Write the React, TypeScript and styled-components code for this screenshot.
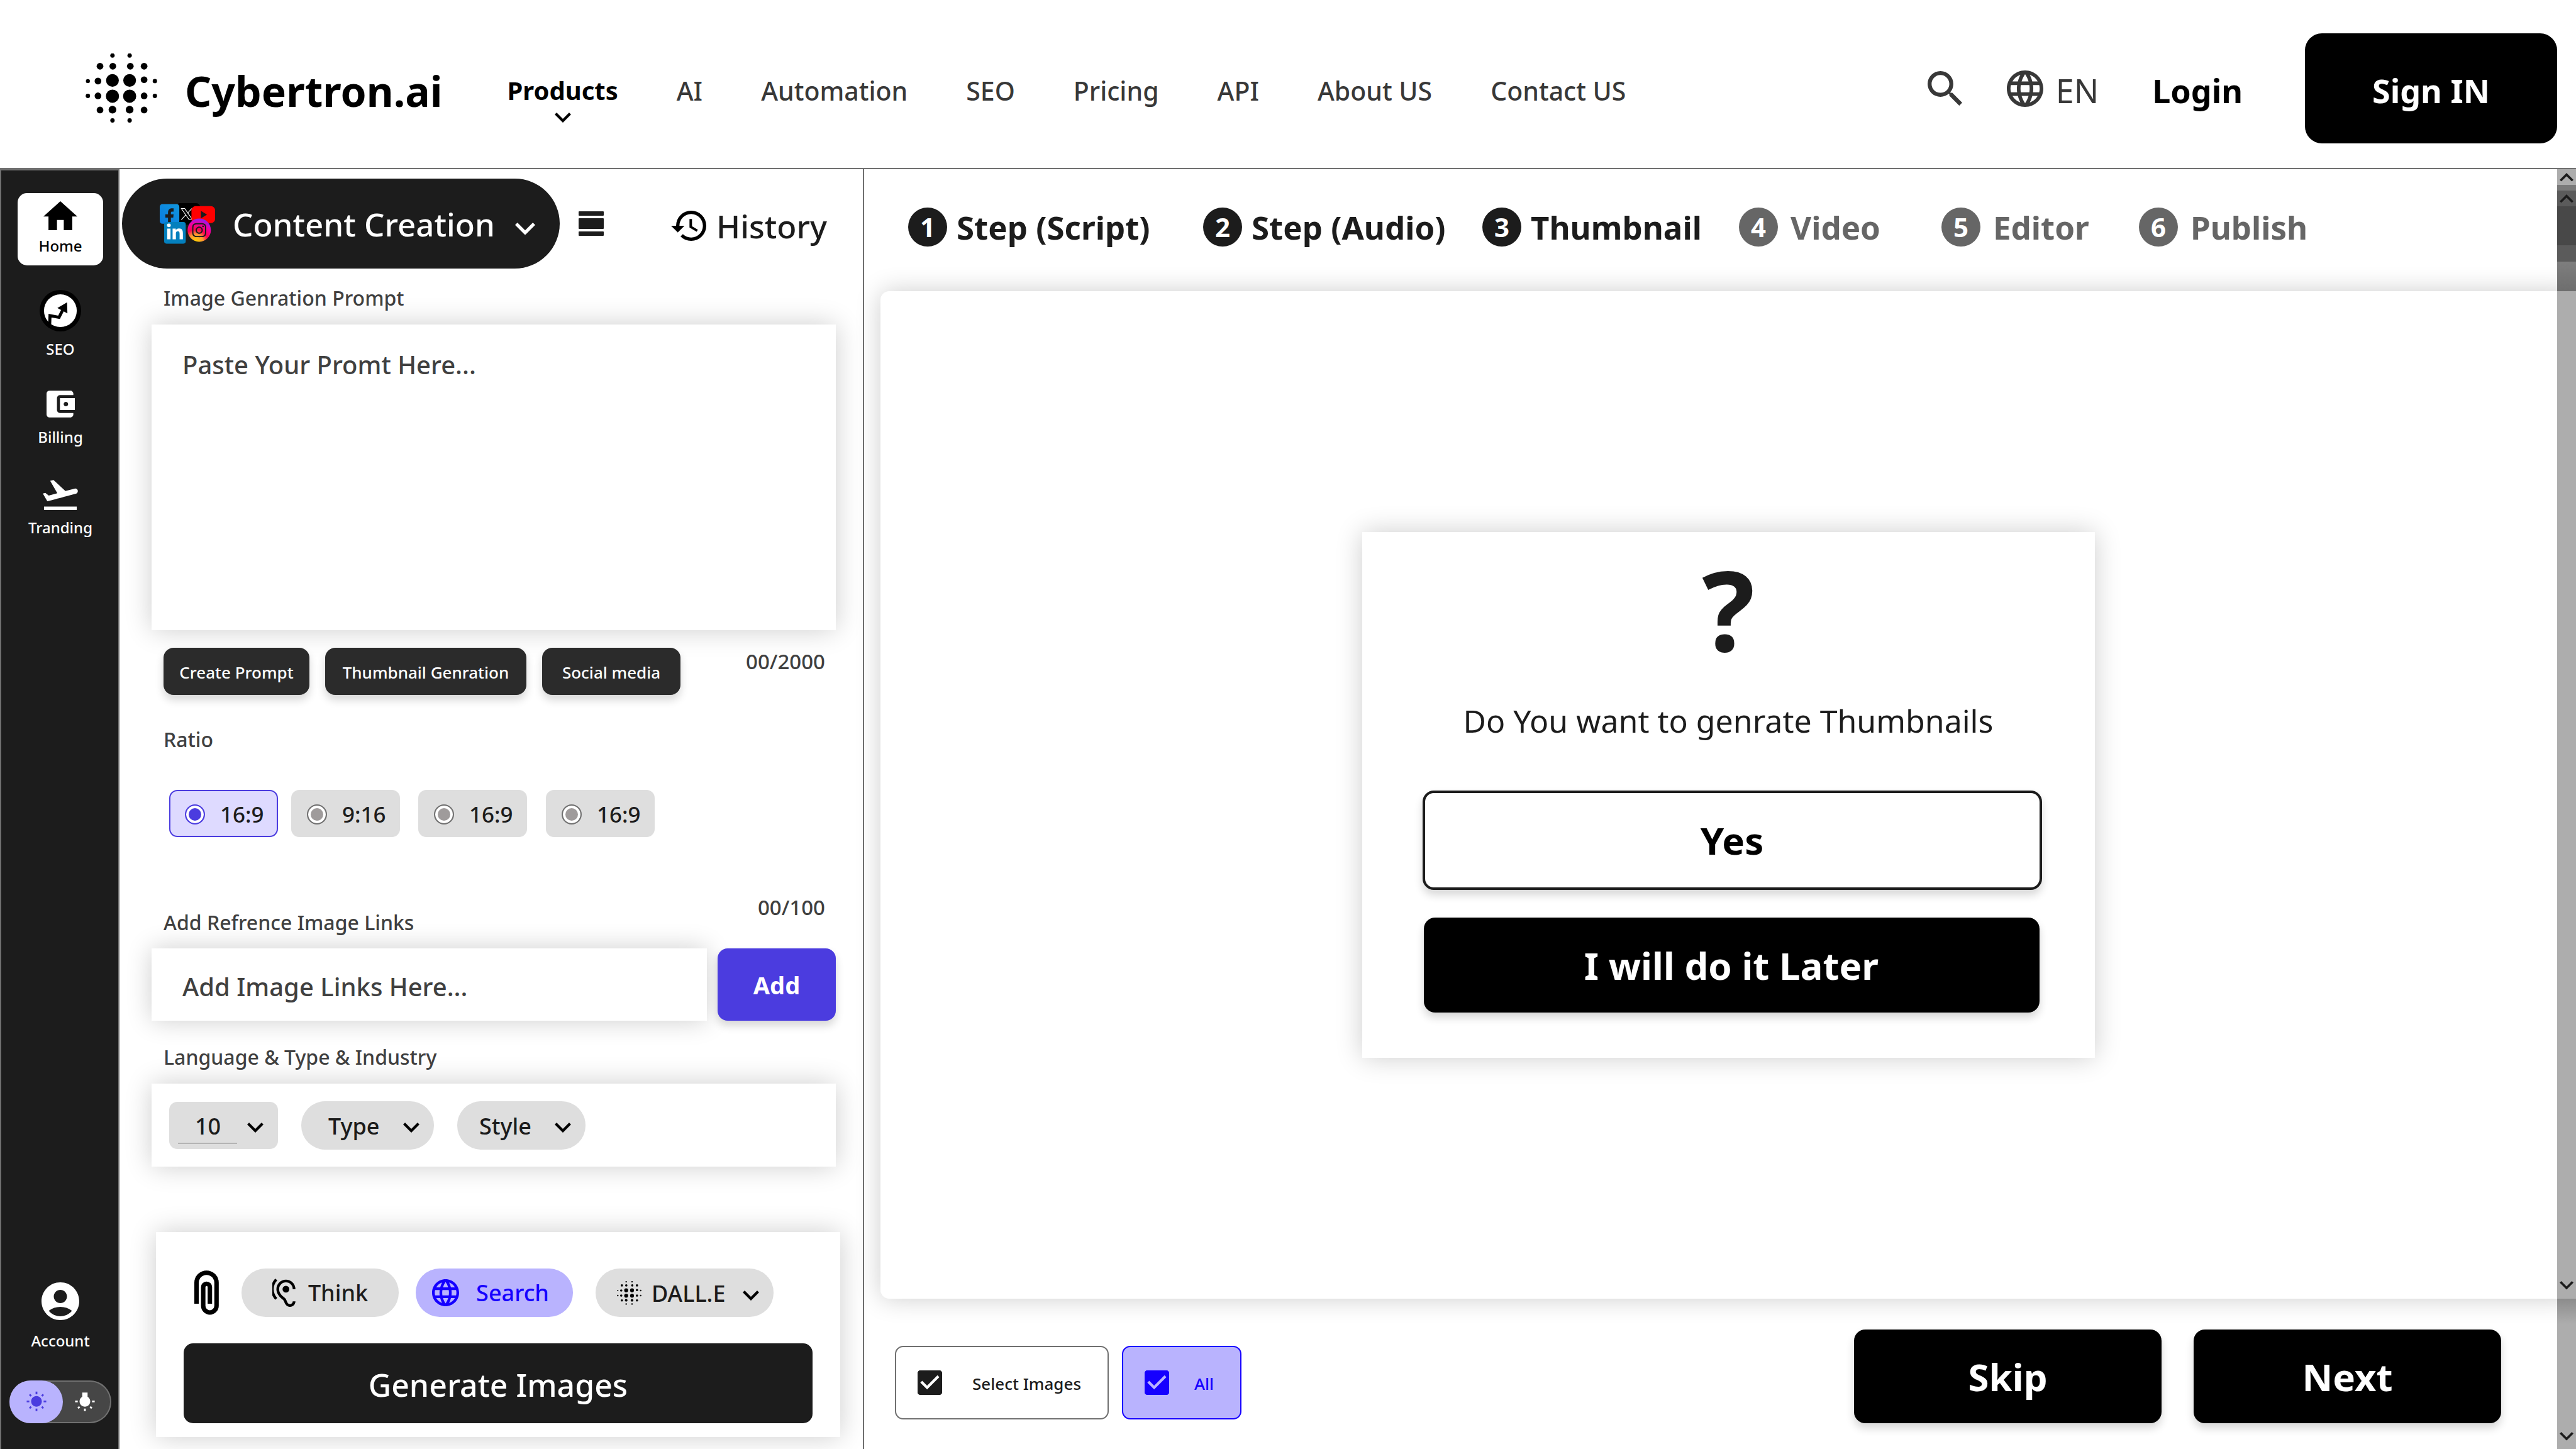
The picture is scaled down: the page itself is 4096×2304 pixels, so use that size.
import React, { useState } from "react";
import styled, { createGlobalStyle, css } from "styled-components";
import {
  MdSearch,
  MdLanguage,
  MdHome,
  MdAccountBalanceWallet,
  MdFlightTakeoff,
  MdAccountCircle,
  MdWbSunny,
  MdWbIncandescent,
  MdHistory,
  MdHearing,
  MdCheckBox,
} from "react-icons/md";
import { FaLinkedinIn, FaInstagram } from "react-icons/fa6";

const ink = "#1c1c1c";
const line = "#707070";
const violet = "#4b3cdf";
const lilac = "#b9b3fe";
const blue = "#1500ff";
const chip = "#dedede";
const cardShadow = "0 0 40px rgba(0, 0, 0, 0.2)";
const buttonShadow = "0 8px 14px rgba(0, 0, 0, 0.16)";

const GlobalStyle = createGlobalStyle`
  *, *::before, *::after { box-sizing: border-box; }
  body {
    margin: 0;
    background: #fff;
    color: ${ink};
    font-family: "Noto Sans", "Open Sans", sans-serif;
    font-weight: 500;
  }
  button, input, textarea, select {
    font: inherit;
    color: inherit;
    border: 0;
    margin: 0;
    padding: 0;
    background: none;
  }
  button { cursor: pointer; }
  svg { display: block; flex: none; }
  ol, ul { list-style: none; margin: 0; padding: 0; }
  h2, p { margin: 0; font: inherit; }
  a { color: inherit; text-decoration: none; }
  fieldset { border: 0; margin: 0; padding: 0; min-width: 0; }
  legend { padding: 0; }
`;

/* ---------- shared drawings ---------- */

const Glyph = styled.span<{ $w: number; $h: number }>`
  display: block;
  flex: none;
  width: ${(p) => p.$w}px;
  height: ${(p) => p.$h}px;
  svg { width: 100%; height: 100%; }
`;

const ChevronSvg = styled.svg<{ $w: number; $up?: boolean }>`
  width: ${(p) => p.$w}px;
  fill: currentColor;
  transform: ${(p) => (p.$up ? "rotate(180deg)" : "none")};
`;

const Chevron = ({ w = 26, up }: { w?: number; up?: boolean }) => (
  <ChevronSvg $w={w} $up={up} viewBox="6 8.59 12 7.41" aria-hidden="true">
    <path d="M7.41 8.59L12 13.17l4.59-4.58L18 10l-6 6-6-6z" />
  </ChevronSvg>
);

const dots: [number, number, number][] = [
  [80, 6, 6.5], [131, 6, 6.5],
  [43, 38, 10], [81, 38, 10], [133, 38, 10], [174, 38, 10],
  [7, 82, 6], [37, 82, 10], [80, 80, 19], [131, 80, 19], [174, 78, 10], [206, 82, 6.5],
  [7, 126, 6.5], [37, 126, 10], [80, 127, 19.5], [131, 127, 19.5], [174, 126, 10], [206, 126, 6.5],
  [43, 168, 10], [80, 167, 11.5], [131, 167, 11.5], [174, 168, 10],
  [80, 199, 6.5], [131, 199, 6.5],
];

const DotsMark = ({ w, small }: { w: number; small?: boolean }) => (
  <svg viewBox="0 0 213 206" width={w} aria-hidden="true">
    {dots.map(([x, y, r], i) => (
      <circle key={i} cx={x} cy={y} r={small && r > 12 ? 17 : r} />
    ))}
  </svg>
);

/* ---------- header ---------- */

const Header = styled.header`
  display: flex;
  align-items: center;
  padding: 53px 30px 39px 136px;
  border-bottom: 2px solid ${line};
`;

const Brand = styled.a`
  display: flex;
  align-items: center;
  gap: 44px;
  color: #000;
  font-size: 66px;
  font-weight: 700;
  line-height: 90px;
  margin-right: 103px;
`;

const HeaderText = styled.span`
  padding-top: 6px;
`;

const Nav = styled.nav`
  display: flex;
  gap: 93px;
  padding-top: 6px;
  font-size: 41px;
  line-height: 56px;
  color: #383838;
`;

const NavLink = styled.a<{ $active?: boolean }>`
  position: relative;
  ${(p) => p.$active && css`color: #000; font-weight: 700; font-size: 40px;`}
`;

const NavChevron = styled.span`
  position: absolute;
  top: 63px;
  left: 50%;
  margin-left: -13px;
`;

const Actions = styled.div`
  display: flex;
  align-items: center;
  margin-left: auto;
  font-size: 52px;
  line-height: 70px;
  color: #383838;
`;

const SearchButton = styled.button`
  color: inherit;
  margin-right: 71px;
`;

const Language = styled.button`
  display: flex;
  align-items: center;
  gap: 20px;
  font-weight: 400;
  margin-right: 85px;
`;

const Login = styled.a`
  padding-top: 6px;
  color: #000;
  font-weight: 700;
  margin-right: 99px;
`;

const SignIn = styled.button`
  width: 401px;
  height: 175px;
  padding-top: 6px;
  border-radius: 27px;
  background: #000;
  color: #fff;
  font-weight: 700;
`;

/* ---------- workspace ---------- */

const Page = styled.div`
  min-height: 100vh;
  display: flex;
  flex-direction: column;
`;

const Workspace = styled.div`
  position: relative;
  flex: 1;
  display: grid;
  grid-template-columns: 190px 1184px 1fr;
  overflow: hidden;
`;

const Sidebar = styled.aside`
  display: flex;
  flex-direction: column;
  align-items: center;
  padding: 36px 0 41px 2px;
  border: 2px solid ${line};
  border-bottom: 0;
  background: ${ink};
  color: #fff;
  font-size: 24px;
  line-height: 32px;
`;

const SideLink = styled.a<{ $top?: number; $gap?: number; $active?: boolean }>`
  display: flex;
  flex-direction: column;
  align-items: center;
  gap: ${(p) => p.$gap ?? 12}px;
  width: 136px;
  margin-top: ${(p) => p.$top ?? 0}px;
  ${(p) =>
    p.$active &&
    css`
      padding: 13px 0 15px;
      border-radius: 15px;
      background: #fff;
      color: #000;
    `}
`;

const SideBottom = styled.div`
  display: flex;
  flex-direction: column;
  align-items: center;
  gap: 47px;
  margin-top: auto;
`;

const Toggle = styled.button`
  display: flex;
  width: 162px;
  height: 68px;
  border-radius: 34px;
  background: #464646;
  box-shadow: inset 0 0 0 2px ${line};
`;

const ToggleHalf = styled.span<{ $on?: boolean }>`
  display: grid;
  place-items: center;
  width: ${(p) => (p.$on ? 85 : 69)}px;
  height: 68px;
  border-radius: 34px;
  background: ${(p) => (p.$on ? lilac : "transparent")};
  color: ${(p) => (p.$on ? violet : "#fff")};
`;

/* ---------- prompt panel ---------- */

const Panel = styled.section`
  display: flex;
  flex-direction: column;
  border-right: 2px solid ${line};
  background: #fff;
`;

const PanelTop = styled.div`
  display: flex;
  align-items: center;
  padding: 15px 0 25px 4px;
  font-size: 51px;
  line-height: 70px;
`;

const ContentMenu = styled.button`
  display: flex;
  align-items: center;
  width: 696px;
  height: 143px;
  padding: 0 39px 0 60px;
  border-radius: 72px;
  background: ${ink};
  color: #fff;
`;

const MenuTitle = styled.span`
  margin: 0 auto 0 28px;
`;

const MenuArrow = styled.span`
  padding-top: 16px;
`;

const Bars = styled.button`
  display: grid;
  gap: 4px;
  width: 40px;
  margin-left: 30px;
`;

const Bar = styled.span<{ $h: number }>`
  height: ${(p) => p.$h}px;
  border-radius: 1px;
  background: ${ink};
`;

const History = styled.button`
  display: flex;
  align-items: center;
  gap: 16px;
  margin-left: 107px;
  padding-top: 6px;
`;

const PanelBody = styled.div`
  padding: 0 43px 0 51px;
`;

const fieldLabel = css`
  display: block;
  padding-left: 19px;
  font-size: 32px;
  line-height: 44px;
  color: #404040;
`;

const FieldLabel = styled.label`
  ${fieldLabel}
`;

const fieldText = css`
  display: block;
  width: 100%;
  background: #fff;
  box-shadow: ${cardShadow};
  font-size: 40px;
  line-height: 56px;
  color: #404040;
  &::placeholder { color: #404040; opacity: 1; }
`;

const PromptBox = styled.textarea`
  ${fieldText}
  height: 486px;
  margin-top: 20px;
  padding: 36px 49px;
  resize: none;
`;

const ChipRow = styled.div`
  display: flex;
  gap: 25px;
  margin-top: 28px;
  padding: 0 17px 0 19px;
`;

const Chip = styled.button<{ $w: number }>`
  width: ${(p) => p.$w}px;
  height: 75px;
  padding-top: 2px;
  border-radius: 16px;
  background: #2b2b2b;
  box-shadow: ${buttonShadow};
  color: #fff;
  font-size: 26px;
  line-height: 36px;
`;

const Counter = styled.span`
  margin-left: auto;
  font-size: 33px;
  line-height: 44px;
  color: #404040;
`;

const RatioGroup = styled.fieldset`
  margin-top: 49px;
`;

const RatioLegend = styled.legend`
  ${fieldLabel}
`;

const RatioRow = styled.div`
  display: grid;
  grid-template-columns: 194px 202px 203px 173px;
  margin-top: 58px;
  padding-left: 28px;
`;

const Ratio = styled.label<{ $on: boolean }>`
  display: flex;
  align-items: center;
  gap: 24px;
  width: 173px;
  height: 75px;
  padding: 2px 0 0 23px;
  border: 2px solid ${(p) => (p.$on ? violet : chip)};
  border-radius: 13px;
  background: ${(p) => (p.$on ? "#dedaff" : chip)};
  font-size: 35px;
  line-height: 48px;
`;

const RadioInput = styled.input`
  appearance: none;
  width: 32px;
  height: 32px;
  border: 2px solid ${line};
  border-radius: 50%;
  background: #9f9b9b;
  box-shadow: inset 0 0 0 4px #fff;
  &:checked {
    border-color: ${violet};
    background: ${violet};
  }
`;

const LinkHead = styled.div`
  display: flex;
  margin-top: 90px;
  padding-right: 17px;
`;

const LinkLabel = styled(FieldLabel)`
  padding-top: 24px;
`;

const LinkRow = styled.div`
  display: grid;
  grid-template-columns: 1fr 188px;
  gap: 17px;
  height: 115px;
  margin: 19px 0 36px;
`;

const LinkInput = styled.input`
  ${fieldText}
  padding: 6px 49px 0;
`;

const AddButton = styled.button`
  border-radius: 16px;
  background: ${violet};
  box-shadow: ${buttonShadow};
  color: #fff;
  font-size: 38px;
  font-weight: 700;
`;

const OptionCard = styled.div`
  display: flex;
  align-items: center;
  gap: 37px;
  height: 132px;
  margin-top: 20px;
  padding-left: 28px;
  background: #fff;
  box-shadow: ${cardShadow};
`;

const SelectWrap = styled.span<{ $w: number }>`
  position: relative;
  width: ${(p) => p.$w}px;
`;

const Select = styled.select<{ $pad: number; $round?: boolean }>`
  appearance: none;
  display: block;
  width: 100%;
  height: ${(p) => (p.$round ? 77 : 75)}px;
  padding: 2px 0 0 ${(p) => p.$pad}px;
  border-radius: ${(p) => (p.$round ? 38 : 13)}px;
  background: ${chip};
  font-size: 36px;
`;

const SelectArrow = styled.span`
  position: absolute;
  right: 23px;
  top: 50%;
  margin-top: -4px;
  color: #000;
  pointer-events: none;
`;

const SelectMark = styled.span`
  position: absolute;
  left: 34px;
  top: 20px;
  color: #000;
  pointer-events: none;
`;

const Underline = styled.span`
  position: absolute;
  left: 14px;
  bottom: 8px;
  width: 94px;
  height: 2px;
  background: #b4b4b4;
`;

const GenerateCard = styled.div`
  margin: auto 36px 19px 58px;
  padding: 58px 44px 22px 44px;
  background: #fff;
  box-shadow: ${cardShadow};
`;

const ToolRow = styled.div`
  display: flex;
  align-items: center;
  gap: 27px;
  padding-left: 17px;
`;

const Attach = styled.button`
  width: 48px;
`;

const ToolPill = styled.button<{ $on?: boolean; $gap: number; $right: number }>`
  display: flex;
  align-items: center;
  justify-content: center;
  gap: ${(p) => p.$gap}px;
  width: 250px;
  height: 77px;
  padding-right: ${(p) => p.$right}px;
  border-radius: 38px;
  background: ${(p) => (p.$on ? lilac : chip)};
  color: ${(p) => (p.$on ? blue : ink)};
  font-size: 36px;
  line-height: 48px;
`;

const ModelSelect = styled(SelectWrap)`
  margin-left: 9px;
`;

const Generate = styled.button`
  display: block;
  width: 100%;
  height: 127px;
  padding-top: 4px;
  margin-top: 42px;
  border-radius: 15px;
  background: ${ink};
  color: #fff;
  font-size: 50px;
`;

/* ---------- stage ---------- */

const Stage = styled.main`
  display: flex;
  flex-direction: column;
  min-width: 0;
`;

const Steps = styled.ol`
  display: grid;
  grid-template-columns: 469px 444px 408px 322px 314px auto;
  padding: 61px 0 71px 70px;
`;

const Step = styled.li<{ $done: boolean }>`
  display: flex;
  align-items: center;
  gap: ${(p) => (p.$done ? 15 : 20)}px;
  color: ${(p) => (p.$done ? ink : "#666")};
  font-size: 51px;
  font-weight: 700;
  line-height: 62px;
  white-space: nowrap;
`;

const StepNumber = styled.span<{ $done: boolean }>`
  display: grid;
  place-items: center;
  width: 62px;
  height: 62px;
  border-radius: 50%;
  background: ${(p) => (p.$done ? ink : "#666")};
  color: #fff;
  font-size: 42px;
`;

const Canvas = styled.section`
  flex: 1;
  display: grid;
  place-items: center;
  margin-left: 26px;
  border-radius: 14px;
  background: #fff;
  box-shadow: ${cardShadow};
`;

const Dialog = styled.div`
  display: flex;
  flex-direction: column;
  align-items: center;
  width: 1165px;
  padding: 32px 81px 72px;
  background: #fff;
  box-shadow: ${cardShadow};
`;

const QuestionMark = styled.span`
  font-size: 176px;
  font-weight: 700;
  line-height: 180px;
`;

const Question = styled.h2`
  margin: 53px 0 76px;
  font-size: 50px;
  font-weight: 400;
  line-height: 70px;
`;

const Answers = styled.div`
  display: grid;
  gap: 44px;
  width: 100%;
  padding: 0 3px 0 15px;
`;

const bigButton = css`
  color: #fff;
  background: #000;
  border-radius: 18px;
  box-shadow: ${buttonShadow};
  font-size: 60px;
  font-weight: 700;
`;

const YesButton = styled.button`
  ${bigButton}
  height: 158px;
  border: 4px solid ${ink};
  background: #fff;
  color: #000;
`;

const LaterButton = styled.button`
  ${bigButton}
  height: 151px;
  margin: 0 4px 0 2px;
`;

const Footer = styled.footer`
  display: flex;
  align-items: flex-start;
  padding: 49px 119px 41px 49px;
`;

const CheckGroup = styled.div`
  display: flex;
  gap: 21px;
  margin-right: auto;
  padding-top: 26px;
`;

const CheckLabel = styled.label<{ $all?: boolean }>`
  display: flex;
  align-items: center;
  gap: ${(p) => (p.$all ? 40 : 48)}px;
  width: ${(p) => (p.$all ? 190 : 340)}px;
  height: 117px;
  padding-left: 34px;
  border: 2px solid ${(p) => (p.$all ? blue : line)};
  border-radius: 13px;
  background: ${(p) => (p.$all ? lilac : "#fff")};
  color: ${(p) => (p.$all ? blue : ink)};
  font-size: 26px;
  line-height: 36px;
`;

const CheckMark = styled.span`
  display: grid;
  > * { grid-area: 1 / 1; }
`;

const CheckInput = styled.input`
  appearance: none;
  width: 39px;
  height: 39px;
  border: 2px solid currentColor;
  border-radius: 5px;
  &:not(:checked) + svg { display: none; }
`;

const CheckText = styled.span`
  padding-top: 2px;
`;

const FooterButtons = styled.div`
  display: flex;
  gap: 51px;
`;

const FooterButton = styled.button`
  ${bigButton}
  width: 489px;
  height: 149px;
`;

/* ---------- scroll rail over the right edge ---------- */

const Rail = styled.div`
  position: absolute;
  top: 0;
  right: 0;
  bottom: 0;
  width: 30px;
  display: flex;
  flex-direction: column;
  color: ${ink};
`;

const RailPart = styled.span<{ $h?: number; $c: string; $end?: number }>`
  display: flex;
  justify-content: center;
  align-items: ${(p) => (p.$end === undefined ? "center" : "flex-end")};
  ${(p) => (p.$h ? `height: ${p.$h}px;` : "flex: 1;")}
  padding-bottom: ${(p) => p.$end ?? 0}px;
  background: ${(p) => p.$c};
`;

/* ---------- pictures made of shapes ---------- */

const SocialIcons = () => (
  <svg viewBox="0 0 164 120" width="88" aria-hidden="true">
    <defs>
      <linearGradient id="fb" x1="0" y1="1" x2="1" y2="0">
        <stop offset="0" stopColor="#0a7be0" />
        <stop offset="1" stopColor="#1197dd" />
      </linearGradient>
      <radialGradient id="ig" cx="0.35" cy="1" r="1.05">
        <stop offset="0" stopColor="#ffd000" />
        <stop offset="0.3" stopColor="#ff9a30" />
        <stop offset="0.5" stopColor="#ff0050" />
        <stop offset="0.75" stopColor="#f000a8" />
        <stop offset="1" stopColor="#7a20ff" />
      </radialGradient>
    </defs>
    <rect x="48" y="0" width="72" height="64" rx="12" fill="#000" />
    <rect x="0" y="3" width="58" height="58" rx="8" fill="url(#fb)" />
    <path
      fill={ink}
      d="M24.500 60V43H16.500V33H24.500V28C24.500 20 29 15.500 36 15.500H41V25H37C34 25 33 26 33 29V33H41L40 43H33V60z"
    />
    <path
      d="M64 16H74L97 49H87zM64 49L78 34M82 30L95 16"
      fill="none"
      stroke="#fff"
      strokeWidth="2"
    />
    <rect x="94" y="9" width="70" height="50" rx="12" fill="#f00" />
    <path d="M122 23l18 11-18 11z" fill={ink} />
    <rect x="13" y="56" width="64" height="64" rx="7" fill="#0480be" />
    <FaLinkedinIn x={18} y={60} size={54} color="#fff" />
    <circle cx="117" cy="80" r="34.500" fill="url(#ig)" />
    <FaInstagram x={93} y={56} size={48} color={ink} />
  </svg>
);

const SeoIcon = () => (
  <svg viewBox="-62 -62 124 124" width="66" aria-hidden="true">
    <circle r="62" fill="#000" />
    <circle r="49" fill="#fff" />
    <path d="M-32 44L-31 15L-4 20L9 -6" fill="none" stroke="#000" strokeWidth="9" />
    <path d="M20 -25L-9 -8L21 8z" />
  </svg>
);

const Paperclip = () => (
  <svg viewBox="0 0 74 134" width="39" height="71" aria-hidden="true">
    <path
      d="M6.700 100V36.800A30.100 30.100 0 0 1 67 36.800V106.500A20.100 20.100 0 0 1 26.800 106.500V50A10 10 0 0 1 46.900 50V100"
      fill="none"
      stroke="#000"
      strokeWidth="13.400"
    />
  </svg>
);

const navItems = ["Products", "AI", "Automation", "SEO", "Pricing", "API", "About US", "Contact US"];
const ratios = ["16:9", "9:16", "16:9", "16:9"];
const steps = ["Step (Script)", "Step (Audio)", "Thumbnail", "Video", "Editor", "Publish"];

export default function App() {
  const [ratio, setRatio] = useState(0);

  return (
    <Page>
      <GlobalStyle />
      <Header>
        <Brand href="#">
          <DotsMark w={114} />
          <HeaderText>Cybertron.ai</HeaderText>
        </Brand>
        <Nav>
          {navItems.map((item, i) => (
            <NavLink key={item} href="#" $active={i === 0}>
              {item}
              {i === 0 && <NavChevron><Chevron /></NavChevron>}
            </NavLink>
          ))}
        </Nav>
        <Actions>
          <SearchButton aria-label="Search site">
            <MdSearch viewBox="3 3 17.49 17.49" size={55} />
          </SearchButton>
          <Language>
            <MdLanguage viewBox="2 2 20 20" size={58} />
            <HeaderText>EN</HeaderText>
          </Language>
          <Login href="#">Login</Login>
          <SignIn>Sign IN</SignIn>
        </Actions>
      </Header>

      <Workspace>
        <Sidebar>
          <SideLink href="#" $active $gap={9}>
            <Glyph $w={54} $h={46}><MdHome viewBox="2 3 20 17" /></Glyph>
            Home
          </SideLink>
          <SideLink href="#" $top={39}>
            <SeoIcon />
            SEO
          </SideLink>
          <SideLink href="#" $top={50} $gap={15}>
            <Glyph $w={45} $h={43}><MdAccountBalanceWallet viewBox="3 3 19 18" /></Glyph>
            Billing
          </SideLink>
          <SideLink href="#" $top={52}>
            <Glyph $w={56} $h={48}><MdFlightTakeoff viewBox="1.8 3.5 20.4 17.5" /></Glyph>
            Tranding
          </SideLink>
          <SideBottom>
            <SideLink href="#" $gap={17}>
              <MdAccountCircle viewBox="2 2 20 20" size={60} />
              Account
            </SideLink>
            <Toggle role="switch" aria-checked="true" aria-label="Light theme">
              <ToggleHalf $on><MdWbSunny size={34} /></ToggleHalf>
              <ToggleHalf><MdWbIncandescent size={34} /></ToggleHalf>
            </Toggle>
          </SideBottom>
        </Sidebar>

        <Panel>
          <PanelTop>
            <ContentMenu>
              <SocialIcons />
              <MenuTitle>Content Creation</MenuTitle>
              <MenuArrow><Chevron w={32} /></MenuArrow>
            </ContentMenu>
            <Bars aria-label="Menu">
              <Bar $h={7} />
              <Bar $h={17} />
              <Bar $h={7} />
            </Bars>
            <History>
              <Glyph $w={56} $h={48}><MdHistory viewBox="1 3 21 18" color="#000" /></Glyph>
              History
            </History>
          </PanelTop>

          <PanelBody>
            <FieldLabel htmlFor="prompt">Image Genration Prompt</FieldLabel>
            <PromptBox id="prompt" placeholder="Paste Your Promt Here..." />
            <ChipRow>
              <Chip $w={232}>Create Prompt</Chip>
              <Chip $w={320}>Thumbnail Genration</Chip>
              <Chip $w={220}>Social media</Chip>
              <Counter>00/2000</Counter>
            </ChipRow>

            <RatioGroup>
              <RatioLegend>Ratio</RatioLegend>
              <RatioRow>
                {ratios.map((r, i) => (
                  <Ratio key={i} $on={ratio === i}>
                    <RadioInput type="radio" name="ratio" checked={ratio === i} onChange={() => setRatio(i)} />
                    {r}
                  </Ratio>
                ))}
              </RatioRow>
            </RatioGroup>

            <LinkHead>
              <LinkLabel htmlFor="link">Add Refrence Image Links</LinkLabel>
              <Counter>00/100</Counter>
            </LinkHead>
            <LinkRow>
              <LinkInput id="link" placeholder="Add Image Links Here..." />
              <AddButton>Add</AddButton>
            </LinkRow>

            <FieldLabel htmlFor="count">Language &amp; Type &amp; Industry</FieldLabel>
            <OptionCard>
              <SelectWrap $w={173}>
                <Select id="count" $pad={41}><option>10</option></Select>
                <Underline />
                <SelectArrow><Chevron /></SelectArrow>
              </SelectWrap>
              <SelectWrap $w={211}>
                <Select aria-label="Type" $pad={43} $round><option>Type</option></Select>
                <SelectArrow><Chevron /></SelectArrow>
              </SelectWrap>
              <SelectWrap $w={204}>
                <Select aria-label="Style" $pad={35} $round><option>Style</option></Select>
                <SelectArrow><Chevron /></SelectArrow>
              </SelectWrap>
            </OptionCard>
          </PanelBody>

          <GenerateCard>
            <ToolRow>
              <Attach aria-label="Attach file"><Paperclip /></Attach>
              <ToolPill $gap={18} $right={0}>
                <Glyph $w={39} $h={45}><MdHearing viewBox="4 1.2 18 20.8" color="#000" /></Glyph>
                Think
              </ToolPill>
              <ToolPill $on $gap={27} $right={12}>
                <MdLanguage viewBox="2 2 20 20" size={43} />
                Search
              </ToolPill>
              <ModelSelect $w={283}>
                <Select aria-label="Model" $pad={89} $round><option>DALL.E</option></Select>
                <SelectMark><DotsMark w={39} small /></SelectMark>
                <SelectArrow><Chevron /></SelectArrow>
              </ModelSelect>
            </ToolRow>
            <Generate>Generate Images</Generate>
          </GenerateCard>
        </Panel>

        <Stage>
          <Steps>
            {steps.map((s, i) => (
              <Step key={s} $done={i < 3}>
                <StepNumber $done={i < 3}>{i + 1}</StepNumber>
                {s}
              </Step>
            ))}
          </Steps>
          <Canvas>
            <Dialog role="dialog" aria-labelledby="question">
              <QuestionMark>?</QuestionMark>
              <Question id="question">Do You want to genrate Thumbnails</Question>
              <Answers>
                <YesButton>Yes</YesButton>
                <LaterButton>I will do it Later</LaterButton>
              </Answers>
            </Dialog>
          </Canvas>
          <Footer>
            <CheckGroup>
              <CheckLabel>
                <CheckMark>
                  <CheckInput type="checkbox" defaultChecked />
                  <MdCheckBox viewBox="3 3 18 18" size={39} pointerEvents="none" />
                </CheckMark>
                <CheckText>Select Images</CheckText>
              </CheckLabel>
              <CheckLabel $all>
                <CheckMark>
                  <CheckInput type="checkbox" defaultChecked />
                  <MdCheckBox viewBox="3 3 18 18" size={39} pointerEvents="none" />
                </CheckMark>
                <CheckText>All</CheckText>
              </CheckLabel>
            </CheckGroup>
            <FooterButtons>
              <FooterButton>Skip</FooterButton>
              <FooterButton>Next</FooterButton>
            </FooterButtons>
          </Footer>
        </Stage>

        <Rail aria-hidden="true">
          <RailPart $h={25} $c="#adadad"><Chevron w={22} up /></RailPart>
          <RailPart $h={9} $c="#7a7a7a" />
          <RailPart $h={25} $c="#5b5b5b"><Chevron w={22} up /></RailPart>
          <RailPart $h={62} $c="#484848" />
          <RailPart $h={26} $c="#5b5b5b" />
          <RailPart $h={47} $c="linear-gradient(#7e7e7e, #6e6e6e)" />
          <RailPart $c="#adadad" $end={14}><Chevron w={22} /></RailPart>
          <RailPart $h={239} $c="linear-gradient(#8c8c8c, #adadad 40px)" $end={13}><Chevron w={22} /></RailPart>
        </Rail>
      </Workspace>
    </Page>
  );
}
